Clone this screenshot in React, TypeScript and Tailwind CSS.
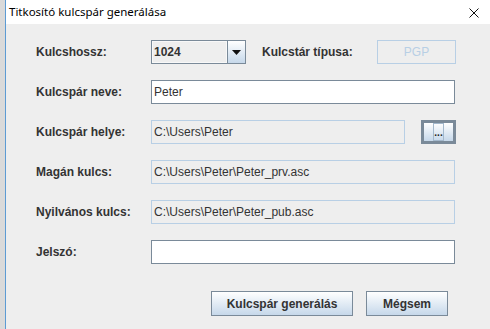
export default function App() {
  const label = "w-[115px] shrink-0 text-[12px] font-bold text-[#333333]";
  const fieldText = "text-[12px] text-[#333333] leading-none";
  const btn =
    "flex h-[25px] items-center justify-center border border-[#7a8a99] bg-gradient-to-b from-white to-[#c6d8ea] text-[12px] font-bold text-[#333333]";

  return (
    <div className="flex h-[329px] w-[490px] overflow-hidden bg-[#eeeeee] font-['Liberation_Sans',Arial,sans-serif]">
      {/* window behind */}
      <div className="w-[5px] shrink-0 bg-[#dadada]" />

      <div className="flex flex-1 flex-col border-l border-[#5d9bd3]">
        {/* Title bar */}
        <div className="flex h-[24px] shrink-0 items-center justify-between bg-white pl-[3px] pr-[11px]">
          <span className="font-['Noto_Sans',sans-serif] text-[11.5px] text-black">
            Titkosító kulcspár generálása
          </span>
          <svg width="10" height="10" viewBox="0 0 10 10" className="mt-[1px]">
            <path d="M0.5 0.5 L9.5 9.5 M9.5 0.5 L0.5 9.5" stroke="#111" strokeWidth="1" />
          </svg>
        </div>

        {/* Form */}
        <div className="flex flex-col gap-4 pl-[30px] pt-[16px]">
          {/* Kulcshossz */}
          <div className="flex h-[24px] items-center">
            <span className={label}>Kulcshossz:</span>
            <div className="flex h-[24px] w-[95px] border border-[#7a8a99]">
              <div className="flex flex-1 items-center border border-[#f8f8f8] bg-[#eeeeee] pl-[1px]">
                <span className="text-[12px] font-bold text-[#333333]">1024</span>
              </div>
              <div className="flex w-[18px] items-center justify-center border-l border-[#7a8a99] bg-gradient-to-b from-white to-[#c6d8ea]">
                <svg width="9" height="5" viewBox="0 0 9 5">
                  <path d="M0 0 H9 L4.5 5 Z" fill="#111" />
                </svg>
              </div>
            </div>
            <span className={`${label} ml-[16px]`}>Kulcstár típusa:</span>
            <div className="flex h-[24px] w-[79px] items-center justify-center border border-[#b8cfe5] bg-[#eeeeee]">
              <span className="text-[12px] text-[#b8cfe5]">PGP</span>
            </div>
          </div>

          {/* Kulcspár neve */}
          <div className="flex h-[24px] items-center">
            <span className={label}>Kulcspár neve:</span>
            <div className="flex h-[24px] w-[304px] items-center border border-[#7a8a99] bg-white pl-[2px]">
              <span className={fieldText}>Peter</span>
            </div>
          </div>

          {/* Kulcspár helye */}
          <div className="flex h-[24px] items-center">
            <span className={label}>Kulcspár helye:</span>
            <div className="flex h-[24px] w-[254px] items-center border border-[#b8cfe5] bg-[#eeeeee] pl-[2px]">
              <span className={fieldText}>C:\Users\Peter</span>
            </div>
            <div className="ml-[16px] flex h-[24px] w-[35px] items-center justify-center border-[3px] border-[#7a8a99] bg-gradient-to-b from-white to-[#c6d8ea]">
              <div className="flex h-[18px] w-[11px] items-end justify-center border border-[#a3b8cc] pb-[2px]">
                <span className="text-[10px] font-bold leading-none text-[#222]">...</span>
              </div>
            </div>
          </div>

          {/* Magán kulcs */}
          <div className="flex h-[24px] items-center">
            <span className={label}>Magán kulcs:</span>
            <div className="flex h-[24px] w-[304px] items-center border border-[#b8cfe5] bg-[#eeeeee] pl-[2px]">
              <span className={fieldText}>C:\Users\Peter\Peter_prv.asc</span>
            </div>
          </div>

          {/* Nyilvános kulcs */}
          <div className="flex h-[24px] items-center">
            <span className={label}>Nyilvános kulcs:</span>
            <div className="flex h-[24px] w-[304px] items-center border border-[#b8cfe5] bg-[#eeeeee] pl-[2px]">
              <span className={fieldText}>C:\Users\Peter\Peter_pub.asc</span>
            </div>
          </div>

          {/* Jelszó */}
          <div className="flex h-[24px] items-center">
            <span className={label}>Jelszó:</span>
            <div className="h-[24px] w-[304px] border border-[#7a8a99] bg-white" />
          </div>

          {/* Buttons */}
          <div className="mt-[11px] flex gap-[13px] pl-[175px]">
            <div className={`${btn} w-[142px]`}>Kulcspár generálás</div>
            <div className={`${btn} w-[82px]`}>Mégsem</div>
          </div>
        </div>
      </div>
    </div>
  );
}
